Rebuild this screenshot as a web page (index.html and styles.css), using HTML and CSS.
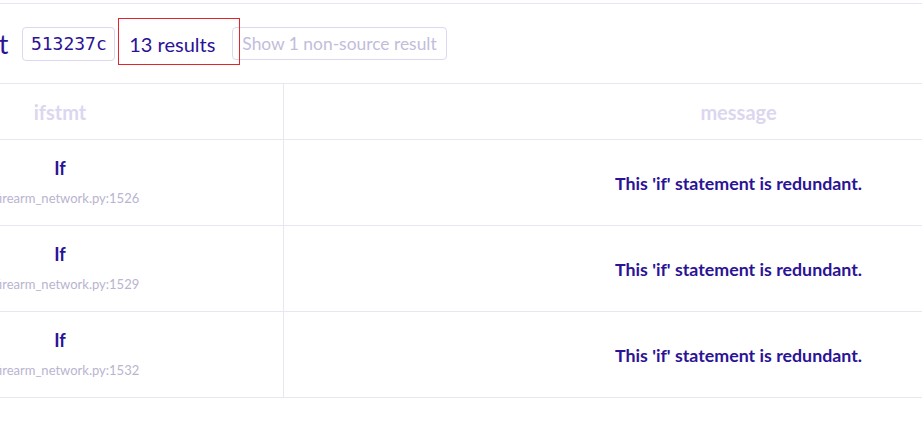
FILE: index.html
```
<!DOCTYPE html>
<html>
<head>
<meta charset="utf-8">
<link rel="stylesheet" href="styles.css">
</head>
<body>
<div class="page">
  <div class="topbar"></div>
  <div class="toolbar">
    <h1 class="title">Alert</h1>
    <span class="hash">513237c</span>
    <span class="count">13 results<span class="highlight"></span></span>
    <button class="toggle">Show 1 non-source result</button>
  </div>
  <table class="results">
    <thead>
      <tr><th class="c1">ifstmt</th><th class="c2">message</th></tr>
    </thead>
    <tbody>
      <tr>
        <td class="c1"><div class="node">If</div><div class="loc">firearm_network.py:1526</div></td>
        <td class="c2 msg">This 'if' statement is redundant.</td>
      </tr>
      <tr>
        <td class="c1"><div class="node">If</div><div class="loc">firearm_network.py:1529</div></td>
        <td class="c2 msg">This 'if' statement is redundant.</td>
      </tr>
      <tr>
        <td class="c1"><div class="node">If</div><div class="loc">firearm_network.py:1532</div></td>
        <td class="c2 msg">This 'if' statement is redundant.</td>
      </tr>
    </tbody>
  </table>
</div>
</body>
</html>
```
FILE: styles.css
```
html, body {
  margin: 0;
  padding: 0;
  background: #ffffff;
  overflow: hidden;
}
body {
  font-family: Lato, "Noto Sans", sans-serif;
  color: #2b1395;
}
.page {
  width: 922px;
  height: 421px;
  overflow: hidden;
}
.topbar {
  height: 3px;
  border-bottom: 1px solid #e7e3f8;
}
.toolbar {
  display: flex;
  align-items: center;
  height: 79px;
  border-bottom: 1px solid #e8e6f0;
  margin-left: -50px;
}
.title {
  margin: 0;
  font-size: 27px;
  font-weight: 400;
  color: #2b1395;
  margin-right: 14px;
}
.hash {
  font-family: "DejaVu Sans Mono", monospace;
  font-size: 18px;
  color: #2b1395;
  border: 1px solid #dcd8f2;
  border-radius: 4px;
  height: 32px;
  line-height: 32px;
  padding: 0 7.5px;
}
.count {
  position: relative;
  font-size: 20px;
  color: #2b1395;
  padding: 0 17px 0 14px;
}
.highlight {
  position: absolute;
  left: 3px;
  top: -14px;
  width: 120px;
  height: 45px;
  border: 1px solid #e3242b;
}
.toggle {
  font-family: Lato, sans-serif;
  font-size: 17.4px;
  color: #c2bdda;
  background: #fff;
  border: 1px solid #dcd8f2;
  border-radius: 4px;
  height: 33px;
  padding: 0 9px;
}
.results {
  border-collapse: collapse;
  margin-left: -163px;
  table-layout: fixed;
  width: 1356px;
}
.results th, .results td {
  border-bottom: 1px solid #e8e6f0;
  text-align: center;
  padding: 0;
}
.results .c1 {
  width: 446px;
  border-right: 1px solid #e8e6f0;
}
.results th {
  height: 55px;
  font-size: 20px;
  font-weight: 700;
  color: #dcd6ef;
}
.results td {
  height: 85px;
}
.node {
  font-size: 18px;
  font-weight: 700;
  color: #2b1395;
  line-height: 22px;
  margin-top: -3px;
}
.loc {
  font-size: 13px;
  color: #b9b4d0;
  margin-top: 11px;
  padding-left: 14px;
}
.msg {
  font-size: 17.8px;
  font-weight: 700;
  color: #2b1395;
}
```
